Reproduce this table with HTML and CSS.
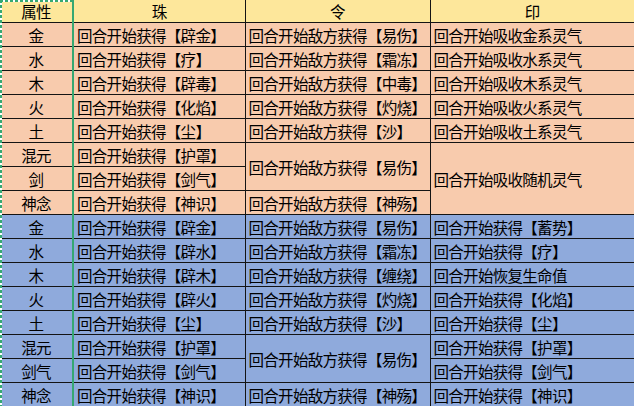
FILE: index.html
```html
<!DOCTYPE html>
<html lang="zh-CN">
<head>
<meta charset="utf-8">
<title>属性表</title>
<link rel="stylesheet" href="styles.css">
</head>
<body>
<div class="sheet">
<table class="grid">
<colgroup>
<col class="c1"><col class="c2"><col class="c3"><col class="c4">
</colgroup>
<thead>
<tr class="head"><th class="attr">属性</th><th>珠</th><th>令</th><th class="last">印</th></tr>
</thead>
<tbody class="peach">
<tr><td class="attr">金</td><td>回合开始获得【辟金】</td><td>回合开始敌方获得【易伤】</td><td class="last">回合开始吸收金系灵气</td></tr>
<tr><td class="attr">水</td><td>回合开始获得【疗】</td><td>回合开始敌方获得【霜冻】</td><td class="last">回合开始吸收水系灵气</td></tr>
<tr><td class="attr">木</td><td>回合开始获得【辟毒】</td><td>回合开始敌方获得【中毒】</td><td class="last">回合开始吸收木系灵气</td></tr>
<tr><td class="attr">火</td><td>回合开始获得【化焰】</td><td>回合开始敌方获得【灼烧】</td><td class="last">回合开始吸收火系灵气</td></tr>
<tr><td class="attr">土</td><td>回合开始获得【尘】</td><td>回合开始敌方获得【沙】</td><td class="last">回合开始吸收土系灵气</td></tr>
<tr><td class="attr">混元</td><td>回合开始获得【护罩】</td><td rowspan="2">回合开始敌方获得【易伤】</td><td class="last" rowspan="3">回合开始吸收随机灵气</td></tr>
<tr><td class="attr">剑</td><td>回合开始获得【剑气】</td></tr>
<tr><td class="attr">神念</td><td>回合开始获得【神识】</td><td>回合开始敌方获得【神殇】</td></tr>
</tbody>
<tbody class="blue">
<tr><td class="attr">金</td><td>回合开始获得【辟金】</td><td>回合开始敌方获得【易伤】</td><td class="last">回合开始获得【蓄势】</td></tr>
<tr><td class="attr">水</td><td>回合开始获得【辟水】</td><td>回合开始敌方获得【霜冻】</td><td class="last">回合开始获得【疗】</td></tr>
<tr><td class="attr">木</td><td>回合开始获得【辟木】</td><td>回合开始敌方获得【缠绕】</td><td class="last">回合开始恢复生命值</td></tr>
<tr><td class="attr">火</td><td>回合开始获得【辟火】</td><td>回合开始敌方获得【灼烧】</td><td class="last">回合开始获得【化焰】</td></tr>
<tr><td class="attr">土</td><td>回合开始获得【尘】</td><td>回合开始敌方获得【沙】</td><td class="last">回合开始获得【尘】</td></tr>
<tr><td class="attr">混元</td><td>回合开始获得【护罩】</td><td rowspan="2">回合开始敌方获得【易伤】</td><td class="last">回合开始获得【护罩】</td></tr>
<tr><td class="attr">剑气</td><td>回合开始获得【剑气】</td><td class="last">回合开始获得【剑气】</td></tr>
<tr><td class="attr">神念</td><td>回合开始获得【神识】</td><td>回合开始敌方获得【神殇】</td><td class="last">回合开始获得【神识】</td></tr>
</tbody>
</table>
<div class="ants-left"></div>
<div class="ants-top"></div>
</div>
</body>
</html>
```

FILE: styles.css
```css
html, body {
  margin: 0;
  padding: 0;
  background: #ffffff;
  overflow: hidden;
}

.sheet {
  position: relative;
  width: 634px;
  height: 406px;
  overflow: hidden;
}

.grid {
  border-collapse: collapse;
  table-layout: fixed;
  width: 634px;
  font-family: "Noto Sans CJK SC", "Noto Sans", sans-serif;
  font-size: 15.5px;
  letter-spacing: -0.7px;
  color: #000000;
}

.c1 { width: 73px; }
.c2 { width: 172px; }
.c3 { width: 185px; }
.c4 { width: 204px; }

.grid th,
.grid td {
  padding: 0 0 0 3px;
  height: 23px;
  line-height: 20px;
  border: 1px solid #141414;
  white-space: nowrap;
  overflow: hidden;
  text-align: left;
  vertical-align: middle;
  font-weight: normal;
}

.grid th {
  text-align: center;
  padding: 0;
  border-top: 0;
  height: 22px;
}

.grid .attr {
  text-align: center;
  padding: 0;
  border-left: 0;
  border-right: 2px solid #36a872;
}

.grid .last {
  border-right: 0;
}

.head th {
  background: #fde79b;
}

.peach td {
  background: #f8cbad;
}

.blue td {
  background: #8faadc;
}

.ants-left {
  position: absolute;
  left: 0;
  top: 0;
  width: 2px;
  height: 406px;
  background: repeating-linear-gradient(to bottom, #36a872 0 3px, #ffffff 3px 5px);
}

.ants-top {
  position: absolute;
  left: 0;
  top: 0;
  width: 72px;
  height: 2px;
  background: repeating-linear-gradient(to right, #36a872 0 3px, #ffffff 3px 5px);
}
```
